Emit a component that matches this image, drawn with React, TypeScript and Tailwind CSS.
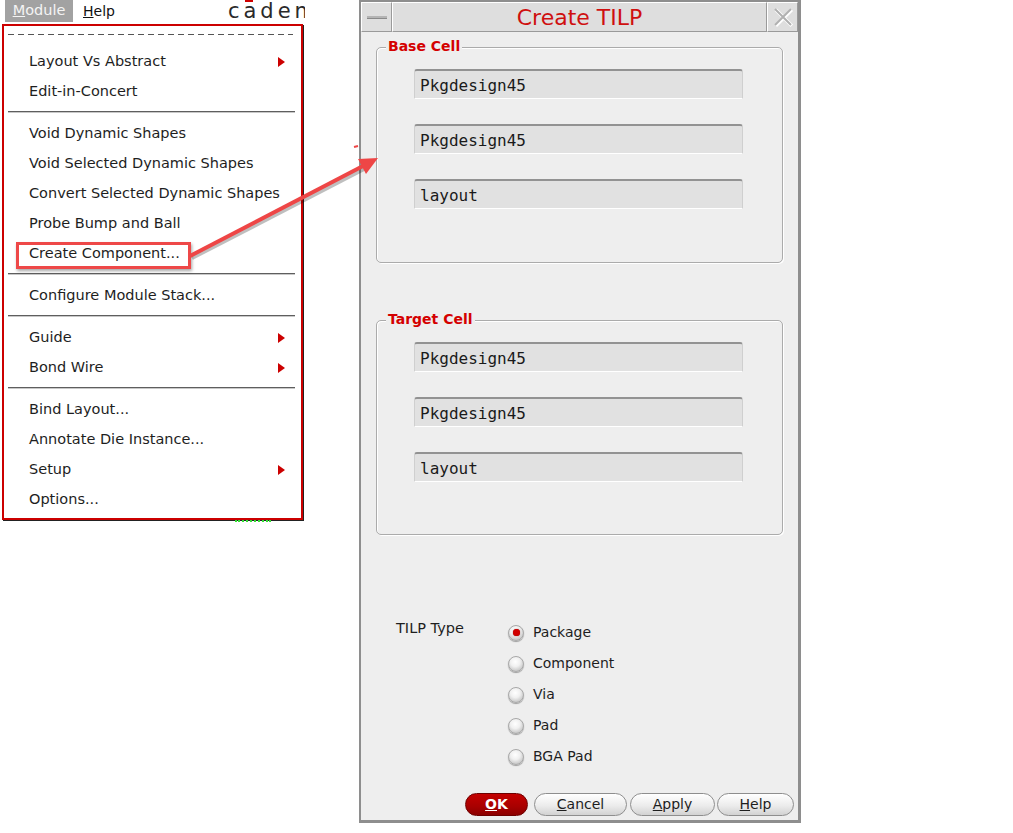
import React from "react";

function Item({ label, arrow, highlight }: { label: string; arrow?: boolean; highlight?: boolean }) {
  return (
    <div className="relative h-[30px] flex items-center pl-[25px] pr-[16px] text-[14.5px] text-[#1e1e1e] whitespace-nowrap">
      <span>{label}</span>
      {arrow && (
        <span className="ml-auto w-0 h-0 border-y-[5px] border-y-transparent border-l-[7px] border-l-[#cc0000]" />
      )}
      {highlight && (
        <div className="absolute left-[12px] top-[3px] w-[175px] h-[27px] border-[3px] border-[#ee4848] shadow-[1px_2px_3px_rgba(0,0,0,0.35)]" />
      )}
    </div>
  );
}

function Sep() {
  return (
    <div className="h-[12px] pt-[4px] pl-[4px] pr-[6px]">
      <div className="h-px bg-[#5e5e5e]" />
      <div className="h-px bg-[#c8c8c8]" />
    </div>
  );
}

function Field({ value, first }: { value: string; first?: boolean }) {
  return (
    <div
      className={
        (first ? "" : "mt-[25px] ") +
        "ml-[37px] w-[329px] h-[30px] bg-[#e1e1e1] border-t-2 border-t-[#929292] border-x border-x-[#cfcfcf] border-b border-b-white rounded-t-[3px] flex items-center pl-[5px] pt-[3px] text-[16px] text-[#1a1a1a] font-['DejaVu_Sans_Mono',monospace]"
      }
    >
      {value}
    </div>
  );
}

function Group({ title, mt, h, values }: { title: string; mt: string; h: string; values: string[] }) {
  return (
    <div className={mt + " " + h + " relative mx-[15px] border border-[#ababab] rounded-[5px] shadow-[inset_1px_1px_0_#ffffff,1px_1px_0_#ffffff] pt-[21px]"}>
      <div className="absolute -top-[10px] left-[9px] px-[2px] bg-[#eeeeee] text-[14px] leading-[16px] font-bold text-[#d40000]">
        {title}
      </div>
      {values.map((v, i) => (
        <Field key={i} value={v} first={i === 0} />
      ))}
    </div>
  );
}

function Radio({ label, checked }: { label: string; checked?: boolean }) {
  return (
    <div className="h-[31px] flex items-center">
      <div className="w-[16px] h-[16px] rounded-full border border-[#a8a8a8] bg-[radial-gradient(circle_at_45%_35%,#ffffff_0%,#f0f0f0_40%,#c4c4c4_80%,#8a8a8a_100%)] shadow-[0_1px_1px_rgba(0,0,0,0.35)] flex items-center justify-center">
        {checked && <div className="w-[7px] h-[7px] rounded-full bg-[#d10000] shadow-[0_0_1px_#700]" />}
      </div>
      <span className="ml-[9px] text-[14px] text-[#1e1e1e]">{label}</span>
    </div>
  );
}

function Btn({ w, ml, children, primary }: { w: string; ml: string; children: React.ReactNode; primary?: boolean }) {
  return (
    <div
      className={
        w +
        " " +
        ml +
        " shrink-0 h-[23px] rounded-full flex items-center justify-center text-[14px] " +
        (primary
          ? "bg-[linear-gradient(#c40000,#a80000_60%,#8c0000)] border border-[#6e0000] text-white font-bold"
          : "bg-[linear-gradient(#ffffff,#ececec_55%,#d2d2d2)] border border-[#8e8e8e] text-[#1e1e1e]")
      }
    >
      {children}
    </div>
  );
}

export default function App() {
  return (
    <div className="relative w-[1013px] h-[833px] bg-white overflow-hidden flex items-start font-['DejaVu_Sans',sans-serif]">
      {/* Left: menubar and menu */}
      <div className="w-[305px] shrink-0 flex flex-col">
        <div className="h-[24px] flex items-start overflow-hidden whitespace-nowrap">
          <div className="shrink-0 ml-[5px] w-[68px] h-[22px] bg-[#a2a2a2] text-[#f4f4f4] text-[14.5px] flex items-center justify-center">
            <span>
              <span className="underline">M</span>odule
            </span>
          </div>
          <div className="shrink-0 ml-[10px] h-[22px] flex items-center text-[14px] text-[#111]">
            <span>
              <span className="underline">H</span>elp
            </span>
          </div>
          <div className="shrink-0 ml-[113px] h-[22px] leading-[22px] text-[21px] tracking-[4px] text-[#2a2a2a]">
            c<span className="relative">a<span className="absolute left-[2px] top-[1px] w-[8px] h-[2px] bg-[#d00000]" /></span>dence
          </div>
        </div>
        <div className="ml-[2px] w-[301px] h-[496px] border-2 border-[#cc0000] bg-white shadow-[1px_1px_0_#222]">
          <div className="h-[21px] pt-[8px] pl-[4px] pr-[8px]">
            <div className="h-px bg-[repeating-linear-gradient(to_right,#555_0_6px,transparent_6px_10px)]" />
          </div>
          <Item label="Layout Vs Abstract" arrow />
          <Item label="Edit-in-Concert" />
          <Sep />
          <Item label="Void Dynamic Shapes" />
          <Item label="Void Selected Dynamic Shapes" />
          <Item label="Convert Selected Dynamic Shapes" />
          <Item label="Probe Bump and Ball" />
          <Item label="Create Component..." highlight />
          <Sep />
          <Item label="Configure Module Stack..." />
          <Sep />
          <Item label="Guide" arrow />
          <Item label="Bond Wire" arrow />
          <Sep />
          <Item label="Bind Layout..." />
          <Item label="Annotate Die Instance..." />
          <Item label="Setup" arrow />
          <Item label="Options..." />
        </div>
        <div className="ml-[235px] w-[36px] border-t-2 border-dotted border-[#33dd33]" />
      </div>

      {/* Dialog */}
      <div className="ml-[54px] w-[442px] h-[823px] shrink-0 flex flex-col border-t-2 border-l-2 border-r-[3px] border-b-[3px] border-[#8e8e8e] bg-[#eeeeee]">
        <div className="h-[30px] flex shrink-0">
          <div className="w-[31px] h-full bg-[#dedede] border border-t-white border-l-white border-r-[#9a9a9a] border-b-[#9a9a9a] flex items-center justify-center">
            <div className="w-[20px] h-[3px] bg-[#b4b4b4] border-b border-b-[#8a8a8a]" />
          </div>
          <div className="flex-1 h-full bg-[#dedede] border border-t-white border-l-white border-r-[#9a9a9a] border-b-[#9a9a9a] flex items-center justify-center text-[22px] text-[#cf1010]">
            Create TILP
          </div>
          <div className="w-[31px] h-full bg-[#dedede] border border-t-white border-l-white border-r-[#9a9a9a] border-b-[#9a9a9a] flex items-center justify-center">
            <svg width="22" height="22" viewBox="0 0 22 22">
              <path d="M3 3 L19 19 M19 3 L3 19" stroke="#ffffff" strokeWidth="3.5" transform="translate(0.8,0.8)" />
              <path d="M3 3 L19 19 M19 3 L3 19" stroke="#b0b0b0" strokeWidth="2" />
            </svg>
          </div>
        </div>

        <Group title="Base Cell" mt="mt-[15px]" h="h-[216px]" values={["Pkgdesign45", "Pkgdesign45", "layout"]} />
        <Group title="Target Cell" mt="mt-[57px]" h="h-[215px]" values={["Pkgdesign45", "Pkgdesign45", "layout"]} />

        <div className="mt-[82px] flex">
          <div className="ml-[35px] w-[112px] leading-[23px] text-[14.5px] text-[#1e1e1e]">TILP Type</div>
          <div className="flex flex-col">
            <Radio label="Package" checked />
            <Radio label="Component" />
            <Radio label="Via" />
            <Radio label="Pad" />
            <Radio label="BGA Pad" />
          </div>
        </div>

        <div className="mt-[21px] flex">
          <Btn w="w-[63px]" ml="ml-[104px]" primary>
            <span>
              <span className="underline">O</span>K
            </span>
          </Btn>
          <Btn w="w-[93px]" ml="ml-[6px]">
            <span>
              <span className="underline">C</span>ancel
            </span>
          </Btn>
          <Btn w="w-[85px]" ml="ml-[3px]">
            <span>
              <span className="underline">A</span>pply
            </span>
          </Btn>
          <Btn w="w-[77px]" ml="ml-[2px]">
            <span>
              <span className="underline">H</span>elp
            </span>
          </Btn>
        </div>
      </div>

      {/* Annotation arrow */}
      <svg className="absolute left-0 top-0 pointer-events-none" width="1013" height="833" viewBox="0 0 1013 833">
        <line x1="192" y1="258" x2="364" y2="169" stroke="rgba(0,0,0,0.25)" strokeWidth="4" />
        <line x1="190" y1="256" x2="363" y2="166" stroke="#ee4646" strokeWidth="4" />
        <polygon points="378,158 358,159 366,174" fill="#ee4646" />
        <line x1="354" y1="147" x2="358" y2="146" stroke="#ee4646" strokeWidth="2" />
      </svg>
    </div>
  );
}
